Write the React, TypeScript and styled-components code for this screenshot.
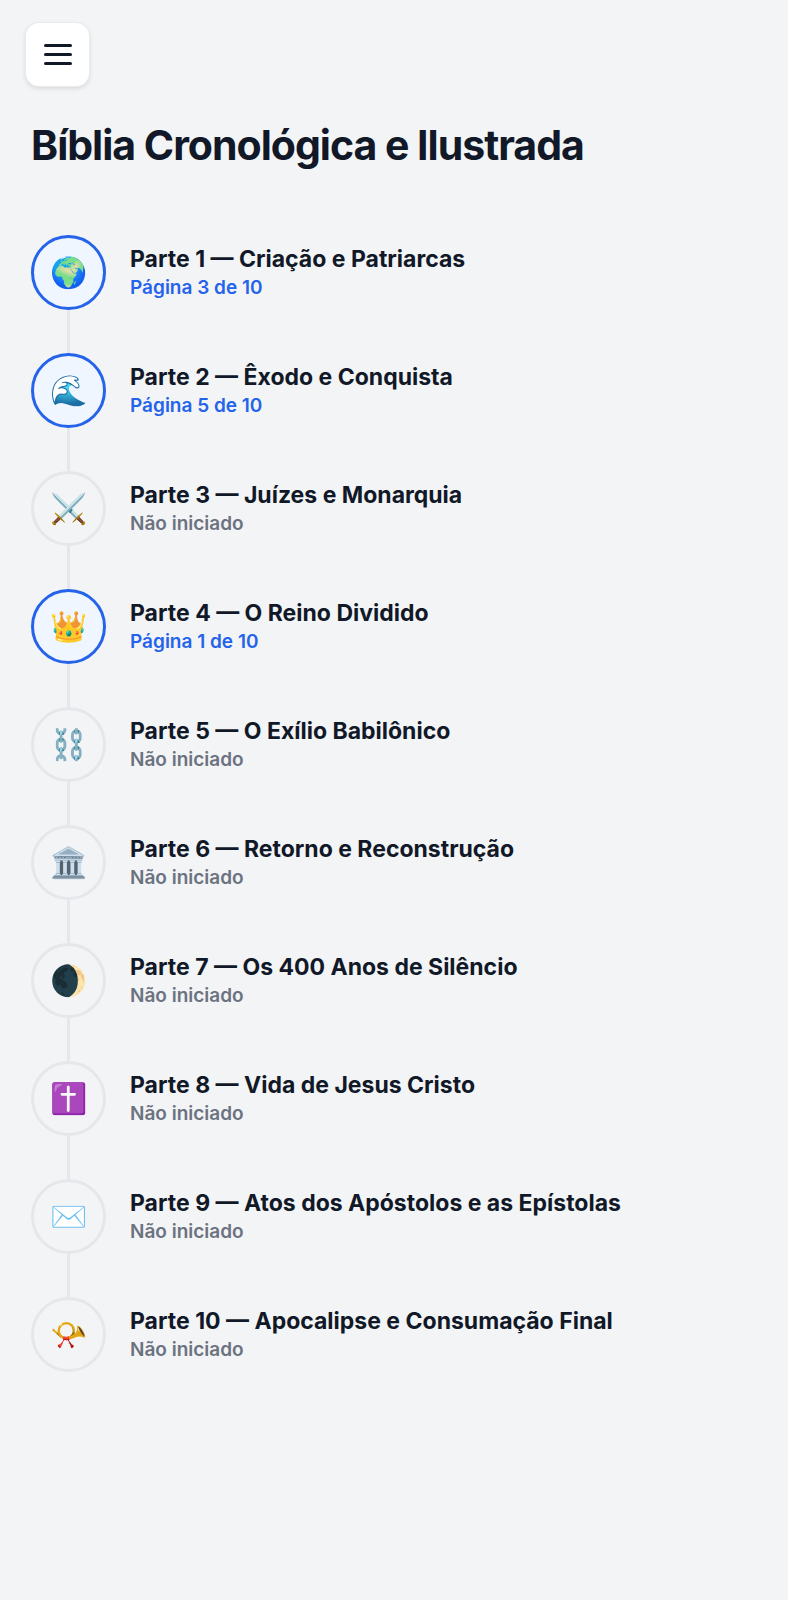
import styled, { createGlobalStyle } from 'styled-components';

interface Part {
    icon: string;
    title: string;
    page?: number;
}

const parts: Part[] = [
    { icon: '🌍', title: 'Criação e Patriarcas', page: 3 },
    { icon: '🌊', title: 'Êxodo e Conquista', page: 5 },
    { icon: '⚔️', title: 'Juízes e Monarquia' },
    { icon: '👑', title: 'O Reino Dividido', page: 1 },
    { icon: '⛓️', title: 'O Exílio Babilônico' },
    { icon: '🏛️', title: 'Retorno e Reconstrução' },
    { icon: '🌒', title: 'Os 400 Anos de Silêncio' },
    { icon: '✝️', title: 'Vida de Jesus Cristo' },
    { icon: '✉️', title: 'Atos dos Apóstolos e as Epístolas' },
    { icon: '📯', title: 'Apocalipse e Consumação Final' },
];

const App = () => {
    return (
        <>
            <GlobalStyle />
            <Page>
                <MenuButton type='button' aria-label='Menu'>
                    <MenuBar />
                    <MenuBar />
                    <MenuBar />
                </MenuButton>
                <Title>Bíblia Cronológica e Ilustrada</Title>
                <Timeline>
                    {parts.map((part, index) => (
                        <TimelineItem key={part.title}>
                            <Marker $active={part.page !== undefined}>{part.icon}</Marker>
                            <PartText>
                                <PartTitle>
                                    Parte {index + 1} — {part.title}
                                </PartTitle>
                                <PartStatus $active={part.page !== undefined}>
                                    {part.page ? `Página ${part.page} de 10` : 'Não iniciado'}
                                </PartStatus>
                            </PartText>
                        </TimelineItem>
                    ))}
                </Timeline>
            </Page>
        </>
    );
};

export default App;

const GlobalStyle = createGlobalStyle`
    * {
        box-sizing: border-box;
    }

    body {
        margin: 0;
        background: #f3f4f6;
        color: #111827;
        font-family: Inter, sans-serif;
    }
`;

const Page = styled.main`
    padding: 23px 31px;
`;

const MenuButton = styled.button`
    display: flex;
    flex-direction: column;
    align-items: center;
    justify-content: center;
    gap: 6px;
    width: 63px;
    height: 63px;
    margin-left: -5px;
    padding: 0;
    border: none;
    border-radius: 13px;
    background: #ffffff;
    box-shadow: 0 0 0 1px #e9ebee, 0 2px 4px 1px rgba(0, 0, 0, 0.1);
    cursor: pointer;
`;

const MenuBar = styled.span`
    width: 28px;
    height: 3px;
    border-radius: 2px;
    background: #111827;
`;

const Title = styled.h1`
    margin: 33px 0 64px;
    font-size: 41px;
    font-weight: 700;
    line-height: 52px;
    letter-spacing: -1px;
`;

const Timeline = styled.ol`
    display: flex;
    flex-direction: column;
    gap: 43px;
    margin: 0;
    padding: 0;
    list-style: none;
`;

const TimelineItem = styled.li`
    position: relative;
    display: flex;
    gap: 24px;

    /* line down to the next marker */
    &:not(:last-child)::after {
        content: '';
        position: absolute;
        top: 75px;
        left: 36px;
        width: 3px;
        height: 43px;
        background: #e5e7eb;
    }
`;

const Marker = styled.div<{ $active: boolean }>`
    display: flex;
    flex-shrink: 0;
    align-items: center;
    justify-content: center;
    width: 75px;
    height: 75px;
    padding: 0 1px 2px 0;
    border: 3px solid ${({ $active }) => ($active ? '#2563eb' : '#e5e7eb')};
    border-radius: 50%;
    background: ${({ $active }) => ($active ? '#eff6ff' : '#f3f4f6')};
    font-size: 30px;
    line-height: 1;
`;

const PartText = styled.div`
    padding-top: 10px;
`;

const PartTitle = styled.h2`
    margin: 0;
    font-size: 23px;
    font-weight: 700;
    line-height: 29px;
`;

const PartStatus = styled.p<{ $active: boolean }>`
    margin: 0;
    color: ${({ $active }) => ($active ? '#2563eb' : '#6b7280')};
    font-size: 19px;
    font-weight: 600;
    line-height: 28px;
`;
